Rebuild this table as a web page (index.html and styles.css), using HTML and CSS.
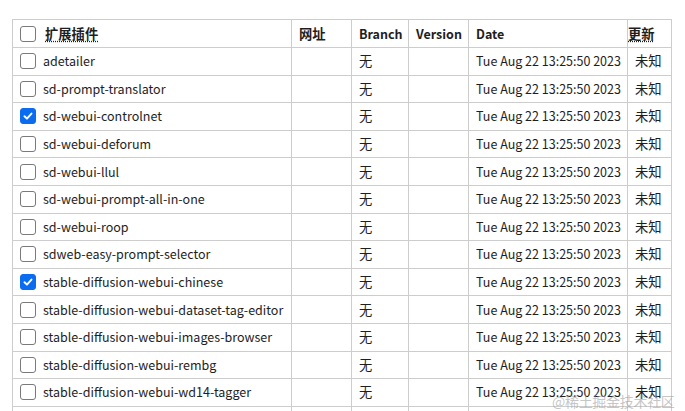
FILE: index.html
```html
<!DOCTYPE html>
<html lang="zh">
<head>
<meta charset="utf-8">
<link rel="stylesheet" href="styles.css">
</head>
<body>
<table class="ext">
  <colgroup>
    <col class="c-name"><col class="c-url"><col class="c-branch"><col class="c-ver"><col class="c-date"><col class="c-upd">
  </colgroup>
  <thead>
    <tr>
      <th><span class="cell-name"><span class="cb"></span><abbr class="hd-name zh">扩展插件</abbr></span></th>
      <th><span class="zh">网址</span></th>
      <th>Branch</th>
      <th>Version</th>
      <th>Date</th>
      <th class="th-upd"><abbr class="zh">更新</abbr></th>
    </tr>
  </thead>
  <tbody>
    <tr><td><span class="cell-name"><span class="cb"></span>adetailer</span></td><td></td><td class="zh">无</td><td></td><td>Tue Aug 22 13:25:50 2023</td><td class="zh">未知</td></tr>
    <tr><td><span class="cell-name"><span class="cb"></span>sd-prompt-translator</span></td><td></td><td class="zh">无</td><td></td><td>Tue Aug 22 13:25:50 2023</td><td class="zh">未知</td></tr>
    <tr><td><span class="cell-name"><span class="cb on"><svg viewBox="0 0 16 16" width="16" height="16"><path d="M4 8.3 L6.8 11 L12 5.2" fill="none" stroke="#fff" stroke-width="2.2" stroke-linecap="round" stroke-linejoin="round"/></svg></span>sd-webui-controlnet</span></td><td></td><td class="zh">无</td><td></td><td>Tue Aug 22 13:25:50 2023</td><td class="zh">未知</td></tr>
    <tr><td><span class="cell-name"><span class="cb"></span>sd-webui-deforum</span></td><td></td><td class="zh">无</td><td></td><td>Tue Aug 22 13:25:50 2023</td><td class="zh">未知</td></tr>
    <tr><td><span class="cell-name"><span class="cb"></span>sd-webui-llul</span></td><td></td><td class="zh">无</td><td></td><td>Tue Aug 22 13:25:50 2023</td><td class="zh">未知</td></tr>
    <tr><td><span class="cell-name"><span class="cb"></span>sd-webui-prompt-all-in-one</span></td><td></td><td class="zh">无</td><td></td><td>Tue Aug 22 13:25:50 2023</td><td class="zh">未知</td></tr>
    <tr><td><span class="cell-name"><span class="cb"></span>sd-webui-roop</span></td><td></td><td class="zh">无</td><td></td><td>Tue Aug 22 13:25:50 2023</td><td class="zh">未知</td></tr>
    <tr><td><span class="cell-name"><span class="cb"></span>sdweb-easy-prompt-selector</span></td><td></td><td class="zh">无</td><td></td><td>Tue Aug 22 13:25:50 2023</td><td class="zh">未知</td></tr>
    <tr><td><span class="cell-name"><span class="cb on"><svg viewBox="0 0 16 16" width="16" height="16"><path d="M4 8.3 L6.8 11 L12 5.2" fill="none" stroke="#fff" stroke-width="2.2" stroke-linecap="round" stroke-linejoin="round"/></svg></span>stable-diffusion-webui-chinese</span></td><td></td><td class="zh">无</td><td></td><td>Tue Aug 22 13:25:50 2023</td><td class="zh">未知</td></tr>
    <tr><td><span class="cell-name"><span class="cb"></span>stable-diffusion-webui-dataset-tag-editor</span></td><td></td><td class="zh">无</td><td></td><td>Tue Aug 22 13:25:50 2023</td><td class="zh">未知</td></tr>
    <tr><td><span class="cell-name"><span class="cb"></span>stable-diffusion-webui-images-browser</span></td><td></td><td class="zh">无</td><td></td><td>Tue Aug 22 13:25:50 2023</td><td class="zh">未知</td></tr>
    <tr><td><span class="cell-name"><span class="cb"></span>stable-diffusion-webui-rembg</span></td><td></td><td class="zh">无</td><td></td><td>Tue Aug 22 13:25:50 2023</td><td class="zh">未知</td></tr>
    <tr><td><span class="cell-name"><span class="cb"></span>stable-diffusion-webui-wd14-tagger</span></td><td></td><td class="zh">无</td><td></td><td>Tue Aug 22 13:25:50 2023</td><td class="zh">未知</td></tr>
    <tr><td></td><td></td><td></td><td></td><td></td><td></td></tr>
  </tbody>
</table>
<div class="watermark">@稀土掘金技术社区</div>
</body>
</html>
```

FILE: styles.css
```css
html, body {
  margin: 0;
  padding: 0;
  background: #fff;
  overflow: hidden;
}
body {
  padding: 19px 0 0 12px;
  font-family: "Noto Sans CJK SC", "Noto Sans", sans-serif;
  font-size: 12.5px;
  color: #1e1e1e;
  position: relative;
  height: 411px;
  box-sizing: border-box;
}
.ext {
  border-collapse: collapse;
  table-layout: fixed;
  width: 659px;
}
.c-name { width: 279px; }
.c-url { width: 60px; }
.c-branch { width: 57px; }
.c-ver { width: 60px; }
.c-date { width: 159px; }
.c-upd { width: 44px; }
.ext th, .ext td {
  border: 1px solid #cdcdcd;
  padding: 0 7px;
  height: 27.6px;
  box-sizing: border-box;
  white-space: nowrap;
  text-align: left;
  vertical-align: middle;
  line-height: 16px;
  overflow: visible;
}
.ext th {
  font-weight: 700;
  height: 28px;
}
.ext th.th-upd { padding-left: 0; }
.zh { font-size: 13.3px; }
.cell-name {
  display: flex;
  align-items: center;
  gap: 7px;
}
.cb {
  width: 16px;
  height: 16px;
  box-sizing: border-box;
  border: 1px solid #7a7a7a;
  border-radius: 3px;
  flex: none;
  display: flex;
  align-items: center;
  justify-content: center;
  background: #fff;
}
.cb.on {
  background: #0b6cf0;
  border-color: #0b6cf0;
}
.cb svg { display: block; }
abbr {
  text-decoration: underline dotted;
  text-underline-offset: 2px;
}
.hd-name { margin-left: 2px; }
.watermark {
  position: absolute;
  left: 552px;
  top: 392px;
  font-size: 14px;
  color: rgba(160,160,160,0.6);
  line-height: 18px;
  letter-spacing: -0.3px;
}
```
